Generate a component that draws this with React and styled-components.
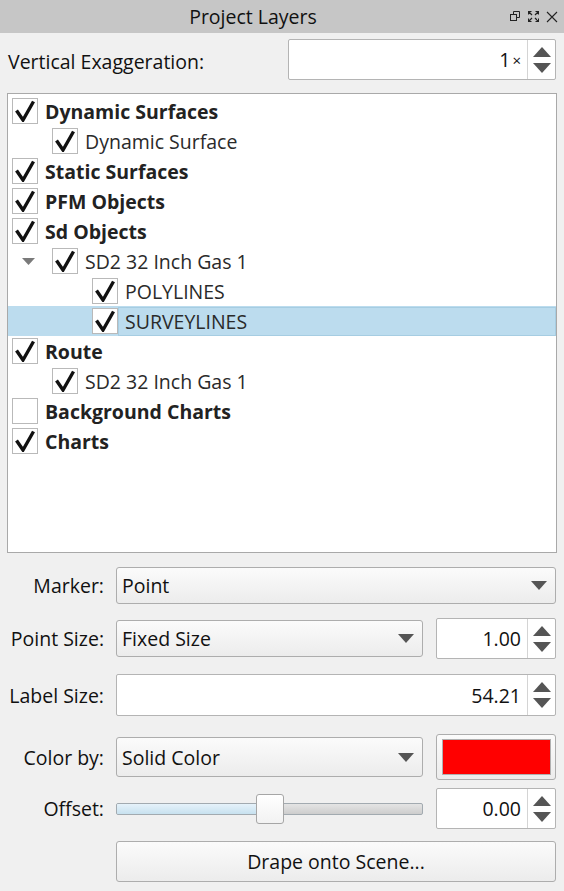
import React from "react";
import styled, {createGlobalStyle} from "styled-components";

const GlobalStyle = createGlobalStyle`
    html, body {
        margin: 0;
        padding: 0;
        background: #f0f0f0;
    }
    body {
        font-family: "Open Sans", "Noto Sans", "Liberation Sans", sans-serif;
        color: #111;
    }
`;

const FONT = "19.5px";

const Panel = styled.div`
    width: 564px;
    height: 891px;
    display: flex;
    flex-direction: column;
    background: #f0f0f0;
    overflow: hidden;
`;

const TitleBar = styled.div`
    height: 33px;
    display: flex;
    align-items: center;
    background: #c6c6c6;
`;

const Title = styled.div`
    flex: 1;
    text-align: center;
    font-size: ${FONT};
    color: #111;
`;

const TitleButtons = styled.div`
    width: 54px;
    display: flex;
    align-items: center;
    gap: 7px;
    padding-left: 4px;
`;

const TopRow = styled.div`
    height: 54px;
    padding: 6px 8px 0;
    display: flex;
    align-items: flex-start;
    justify-content: space-between;
`;

const Label = styled.div`
    font-size: ${FONT};
    white-space: nowrap;
    line-height: 41px;
    padding-top: 2px;
`;

const SpinBox = styled.div`
    width: ${props => props.$width}px;
    height: ${props => props.$height || 41}px;
    box-sizing: border-box;
    display: flex;
    background: #fff;
    border: 1px solid #b4b4b4;
    border-radius: 2px;
`;

const SpinValue = styled.div`
    flex: 1;
    display: flex;
    align-items: center;
    justify-content: flex-end;
    padding-right: 6px;
    font-size: ${FONT};
    color: #111;
`;

const Suffix = styled.span`
    font-size: 15px;
    margin-left: 2px;
`;

const SpinButtons = styled.div`
    width: 27px;
    border-left: 1px solid #d4d4d4;
    display: flex;
    flex-direction: column;
    align-items: center;
    justify-content: center;
    gap: 6px;
`;

const Tree = styled.div`
    margin: 0 7px;
    height: 460px;
    box-sizing: border-box;
    border: 1px solid #a9a9a9;
    background: #fff;
    padding-top: 2px;
`;

const TreeRow = styled.div`
    height: 30px;
    display: flex;
    align-items: center;
    padding-left: 4px;
    background: ${props => props.$selected ? "#bcdcee" : "transparent"};
`;

const Indent = styled.div`
    width: ${props => props.$level * 40}px;
    flex-shrink: 0;
    box-sizing: border-box;
    padding-left: ${props => props.$level > 0 ? (props.$level - 1) * 40 + 10 : 0}px;
    display: flex;
    align-items: center;
`;

const CheckBox = styled.div`
    width: 26px;
    height: 26px;
    box-sizing: border-box;
    border: 1px solid #b9b9b9;
    background: #fff;
    display: flex;
    align-items: center;
    justify-content: center;
    flex-shrink: 0;
`;

const ItemText = styled.div`
    font-size: ${FONT};
    font-weight: ${props => props.$bold ? 700 : 400};
    color: ${props => props.$bold ? "#222" : "#2a2a2a"};
    height: 29px;
    display: flex;
    align-items: center;
    padding-left: ${props => props.$selected ? 6 : 7}px;
    flex: 1;
    box-sizing: border-box;
    border: ${props => props.$selected ? "1px solid #a6cde2" : "none"};
`;

const Form = styled.div`
    display: flex;
    flex-direction: column;
    padding-right: 8px;
`;

const FormRow = styled.div`
    display: flex;
    align-items: center;
    gap: 12px;
    margin-top: ${props => props.$top}px;
    height: ${props => props.$height}px;
`;

const FormLabel = styled.div`
    width: 104px;
    flex-shrink: 0;
    text-align: right;
    font-size: ${FONT};
    white-space: nowrap;
`;

const Controls = styled.div`
    flex: 1;
    display: flex;
    align-items: center;
    gap: 13px;
`;

const Combo = styled.div`
    flex: ${props => props.$fixed ? "0 0 307px" : "1"};
    height: ${props => props.$height || 37}px;
    box-sizing: border-box;
    display: flex;
    align-items: center;
    justify-content: space-between;
    padding: 0 8px 0 5px;
    border: 1px solid #adadad;
    border-radius: 3px;
    background: linear-gradient(#fbfbfb, #ececec);
    font-size: ${FONT};
`;

const ColorButton = styled.div`
    width: 120px;
    height: 46px;
    box-sizing: border-box;
    border: 1px solid #adadad;
    border-radius: 3px;
    background: linear-gradient(#fbfbfb, #ececec);
    padding: 4px 4px 4px 5px;
`;

const Swatch = styled.div`
    height: 100%;
    background: ${props => props.$color};
    border: 1px solid #b0b0b0;
    box-sizing: border-box;
`;

const SliderTrack = styled.div`
    flex: 0 0 307px;
    height: 30px;
    position: relative;
    display: flex;
    align-items: center;
`;

const Groove = styled.div`
    width: 100%;
    height: 12px;
    box-sizing: border-box;
    border: 1px solid #a2aab0;
    border-radius: 2px;
    background: linear-gradient(#e4e4e4, #cdcdcd);
    overflow: hidden;
`;

const GrooveFill = styled.div`
    height: 100%;
    background: linear-gradient(#e6f2fa, #c7e1ef);
`;

const Handle = styled.div`
    position: absolute;
    top: 0;
    width: 28px;
    height: 30px;
    box-sizing: border-box;
    border: 1px solid #a6a6a6;
    border-radius: 3px;
    background: linear-gradient(#ffffff, #f2f2f2);
`;

const Spacer = styled.div`
    width: 104px;
    flex-shrink: 0;
`;

const Button = styled.div`
    flex: 1;
    height: 41px;
    box-sizing: border-box;
    display: flex;
    align-items: center;
    justify-content: center;
    border: 1px solid #adadad;
    border-radius: 3px;
    background: linear-gradient(#fbfbfb, #ececec);
    font-size: ${FONT};
`;

function Check() {
    return (
        <svg width="22" height="22" viewBox="0 0 22 22">
            <path d="M2.5 10.5 L9 20 L19.5 1.5" fill="none" stroke="#111" strokeWidth="3.4" strokeLinejoin="miter"/>
        </svg>
    );
}

function Triangle({down, color = "#555", w = 16, h = 9}) {
    return (
        <svg width={w} height={h} viewBox={`0 0 ${w} ${h}`}>
            <path d={down ? `M0 0 L${w} 0 L${w / 2} ${h} Z` : `M0 ${h} L${w} ${h} L${w / 2} 0 Z`} fill={color}/>
        </svg>
    );
}

function Spinner({value, width, height, suffix}) {
    return (
        <SpinBox $width={width} $height={height}>
            <SpinValue>{value}{suffix}</SpinValue>
            <SpinButtons>
                <Triangle w={18} h={10}/>
                <Triangle down w={18} h={10}/>
            </SpinButtons>
        </SpinBox>
    );
}

const layers = [
    {name: "Dynamic Surfaces", level: 0, bold: true, checked: true},
    {name: "Dynamic Surface", level: 1, checked: true},
    {name: "Static Surfaces", level: 0, bold: true, checked: true},
    {name: "PFM Objects", level: 0, bold: true, checked: true},
    {name: "Sd Objects", level: 0, bold: true, checked: true},
    {name: "SD2 32 Inch Gas 1", level: 1, checked: true, expanded: true},
    {name: "POLYLINES", level: 2, checked: true},
    {name: "SURVEYLINES", level: 2, checked: true, selected: true},
    {name: "Route", level: 0, bold: true, checked: true},
    {name: "SD2 32 Inch Gas 1", level: 1, checked: true},
    {name: "Background Charts", level: 0, bold: true, checked: false},
    {name: "Charts", level: 0, bold: true, checked: true},
];

function LayerRow({layer}) {
    return (
        <TreeRow $selected={layer.selected}>
            <Indent $level={layer.level}>
                {layer.expanded ? <Triangle down color="#7a7a7a" w={13} h={7}/> : null}
            </Indent>
            <CheckBox>{layer.checked ? <Check/> : null}</CheckBox>
            <ItemText $bold={layer.bold} $selected={layer.selected}>{layer.name}</ItemText>
        </TreeRow>
    );
}

function TitleControls() {
    return (
        <TitleButtons>
            <svg width="11" height="11" viewBox="0 0 11 11">
                <rect x="0.5" y="3.5" width="6" height="6" fill="none" stroke="#222"/>
                <path d="M3.5 3.5 V0.5 H9.5 V6.5 H6.5" fill="none" stroke="#222"/>
            </svg>
            <svg width="11" height="11" viewBox="0 0 11 11">
                <path d="M0.5 3.5 V0.5 H3.5 M7.5 0.5 H10.5 V3.5 M10.5 7.5 V10.5 H7.5 M3.5 10.5 H0.5 V7.5 M1 1 L4 4 M10 1 L7 4 M10 10 L7 7 M1 10 L4 7" fill="none" stroke="#222" strokeWidth="1.2"/>
            </svg>
            <svg width="12" height="12" viewBox="0 0 12 12">
                <path d="M1 1 L11 11 M11 1 L1 11" stroke="#222" strokeWidth="1.1"/>
            </svg>
        </TitleButtons>
    );
}

export default function App() {
    return (
        <Panel>
            <GlobalStyle/>
            <TitleBar>
                <Title>Project Layers</Title>
                <TitleControls/>
            </TitleBar>
            <TopRow>
                <Label>Vertical Exaggeration:</Label>
                <Spinner value="1" suffix={<Suffix>×</Suffix>} width={268}/>
            </TopRow>
            <Tree>
                {layers.map((layer, i) => <LayerRow key={i} layer={layer}/>)}
            </Tree>
            <Form>
                <FormRow $top={14} $height={37}>
                    <FormLabel>Marker:</FormLabel>
                    <Controls>
                        <Combo><span>Point</span><Triangle down w={16} h={9}/></Combo>
                    </Controls>
                </FormRow>
                <FormRow $top={14} $height={41}>
                    <FormLabel>Point Size:</FormLabel>
                    <Controls>
                        <Combo $fixed><span>Fixed Size</span><Triangle down w={16} h={9}/></Combo>
                        <Spinner value="1.00" width={120}/>
                    </Controls>
                </FormRow>
                <FormRow $top={15} $height={42}>
                    <FormLabel>Label Size:</FormLabel>
                    <Controls>
                        <Spinner value="54.21" width={440} height={42}/>
                    </Controls>
                </FormRow>
                <FormRow $top={18} $height={46}>
                    <FormLabel>Color by:</FormLabel>
                    <Controls>
                        <Combo $fixed $height={40}><span>Solid Color</span><Triangle down w={16} h={9}/></Combo>
                        <ColorButton><Swatch $color="#ff0000"/></ColorButton>
                    </Controls>
                </FormRow>
                <FormRow $top={8} $height={41}>
                    <FormLabel>Offset:</FormLabel>
                    <Controls>
                        <SliderTrack>
                            <Groove><GrooveFill style={{width: "46%"}}/></Groove>
                            <Handle style={{left: 140}}/>
                        </SliderTrack>
                        <Spinner value="0.00" width={120}/>
                    </Controls>
                </FormRow>
                <FormRow $top={12} $height={41}>
                    <Spacer/>
                    <Button>Drape onto Scene...</Button>
                </FormRow>
            </Form>
        </Panel>
    );
}
